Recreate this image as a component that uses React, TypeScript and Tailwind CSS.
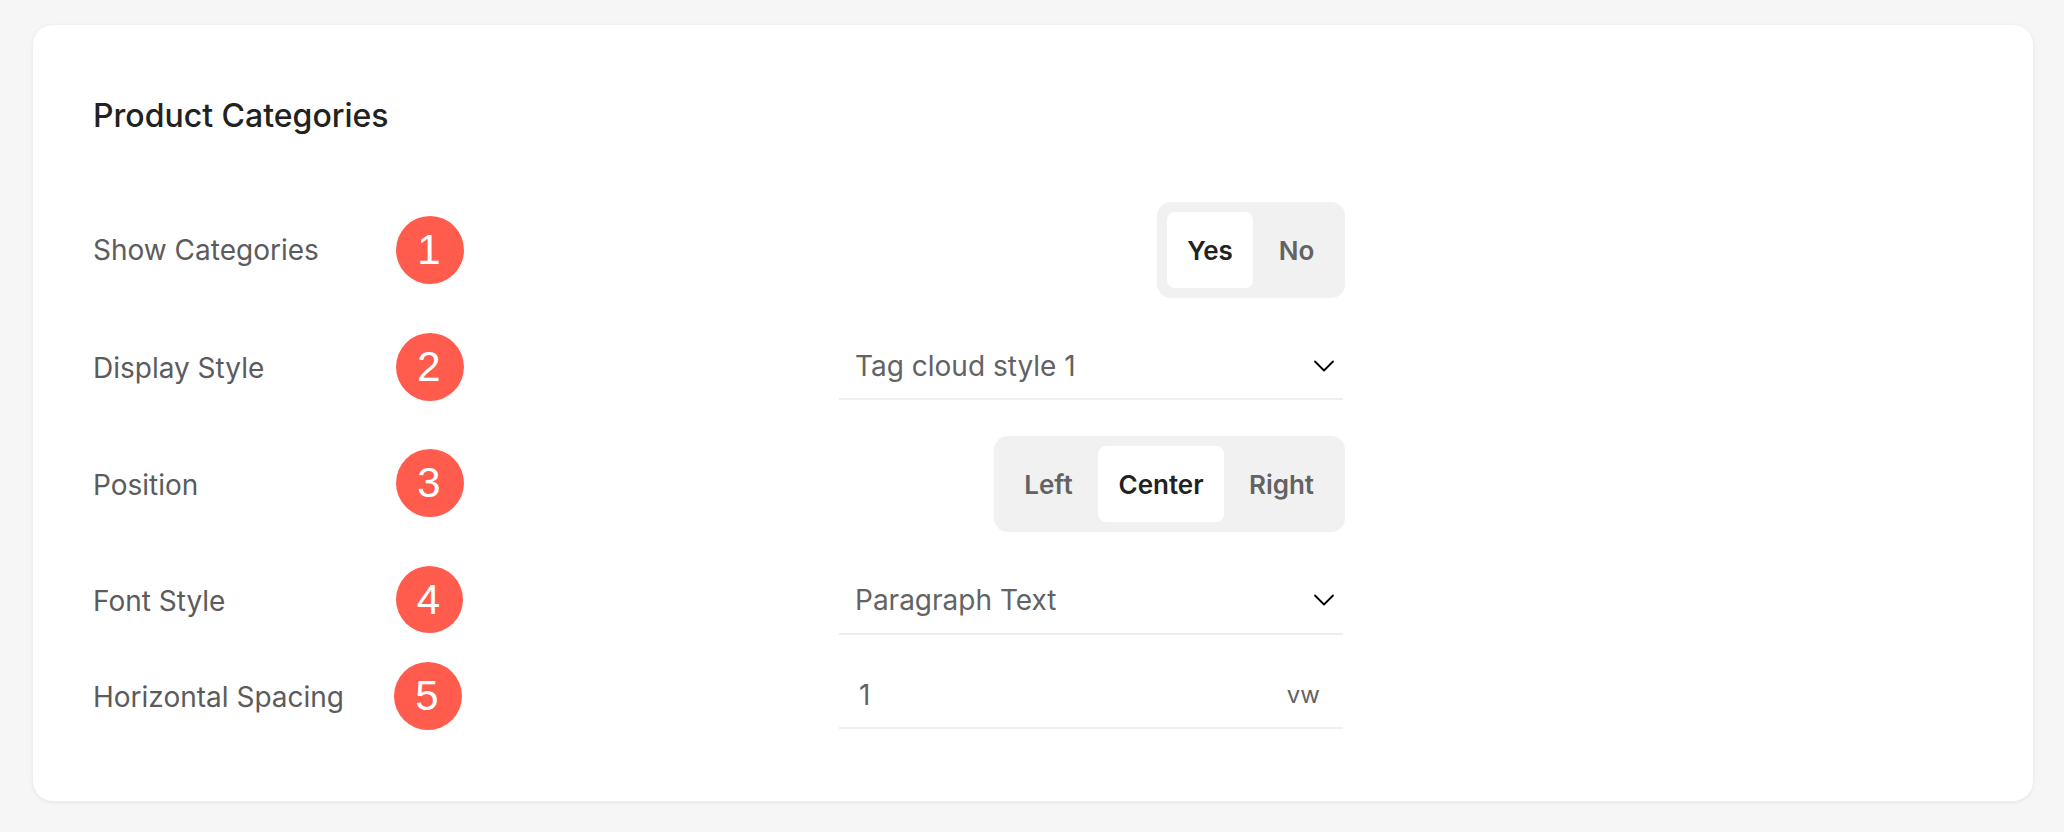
import { ChevronDown } from "lucide-react";

function Badge({ n, className }: { n: number; className: string }) {
  return (
    <span
      className={`absolute flex items-center justify-center rounded-full bg-[#ff5c4d] pr-[2px] text-white font-['Liberation_Sans',sans-serif] text-[42px] leading-none ${className}`}
    >
      {n}
    </span>
  );
}

function Segmented({ options, active }: { options: { label: string; width: string }[]; active: string }) {
  return (
    <div className="-mr-[2px] flex h-[96px] items-stretch rounded-[14px] bg-[#f1f1f1] p-[10px]">
      {options.map((o) => (
        <div
          key={o.label}
          className={`flex items-center justify-center rounded-[8px] text-[26px] font-semibold ${o.width} ${
            o.label === active ? "bg-white text-[#222222]" : "text-[#636363]"
          }`}
        >
          {o.label}
        </div>
      ))}
    </div>
  );
}

function Select({ value, className }: { value: string; className: string }) {
  return (
    <div className={`flex w-full items-center justify-between border-b-2 border-[#eeeeee] pl-[16px] pr-px text-[28px] text-[#636363] ${className}`}>
      <span>{value}</span>
      <ChevronDown size={36} strokeWidth={1.2} className="text-black" />
    </div>
  );
}

function Row({ label, className, labelClass, children }: { label: string; className?: string; labelClass?: string; children: React.ReactNode }) {
  return (
    <div className={`relative flex items-center ${className ?? ""}`}>
      <div className={`w-[746px] text-[28px] text-[#5c5c5c] ${labelClass ?? ""}`}>{label}</div>
      <div className="flex w-[504px] justify-end">{children}</div>
    </div>
  );
}

export default function App() {
  return (
    <div className="min-h-[832px] bg-[#f6f6f6] px-[33px] pt-[25px] font-['Inter',sans-serif]">
      <div className="h-[776px] w-[2000px] rounded-[20px] bg-white pl-[60px] pt-[71px] shadow-[0_1px_4px_rgba(0,0,0,0.08)]">
        <h2 className="mb-[66px] text-[32px] font-medium leading-[40px] text-[#222222]">Product Categories</h2>

        <Row label="Show Categories" className="mb-[36px]">
          <Segmented
            active="Yes"
            options={[
              { label: "Yes", width: "w-[86px]" },
              { label: "No", width: "w-[82px] pl-[5px]" },
            ]}
          />
          <Badge n={1} className="left-[303px] top-[14px] h-[68px] w-[68px]" />
        </Row>

        <Row label="Display Style" className="mb-[36px]" labelClass="pt-[2px]">
          <Select value="Tag cloud style 1" className="h-[66px] pb-px" />
          <Badge n={2} className="left-[303px] top-[-1px] h-[68px] w-[68px]" />
        </Row>

        <Row label="Position" className="mb-[36px]" labelClass="pt-[2px]">
          <Segmented
            active="Center"
            options={[
              { label: "Left", width: "w-[94px] pr-[5px]" },
              { label: "Center", width: "w-[126px]" },
              { label: "Right", width: "w-[111px] pl-[4px]" },
            ]}
          />
          <Badge n={3} className="left-[303px] top-[13px] h-[68px] w-[68px]" />
        </Row>

        <Row label="Font Style" className="mb-[28px]" labelClass="pb-[2px]">
          <Select value="Paragraph Text" className="h-[67px] pb-[2px]" />
          <Badge n={4} className="left-[303px] top-[-2px] h-[67px] w-[67px]" />
        </Row>

        <Row label="Horizontal Spacing" labelClass="pt-[2px]">
          <div className="flex h-[66px] w-full items-center justify-between border-b-2 border-[#eeeeee] pl-[20px] pr-[23px] text-[#636363]">
            <span className="text-[28px]">1</span>
            <span className="text-[24px]">vw</span>
          </div>
          <Badge n={5} className="left-[301px] top-[-1px] h-[68px] w-[68px]" />
        </Row>
      </div>
    </div>
  );
}
